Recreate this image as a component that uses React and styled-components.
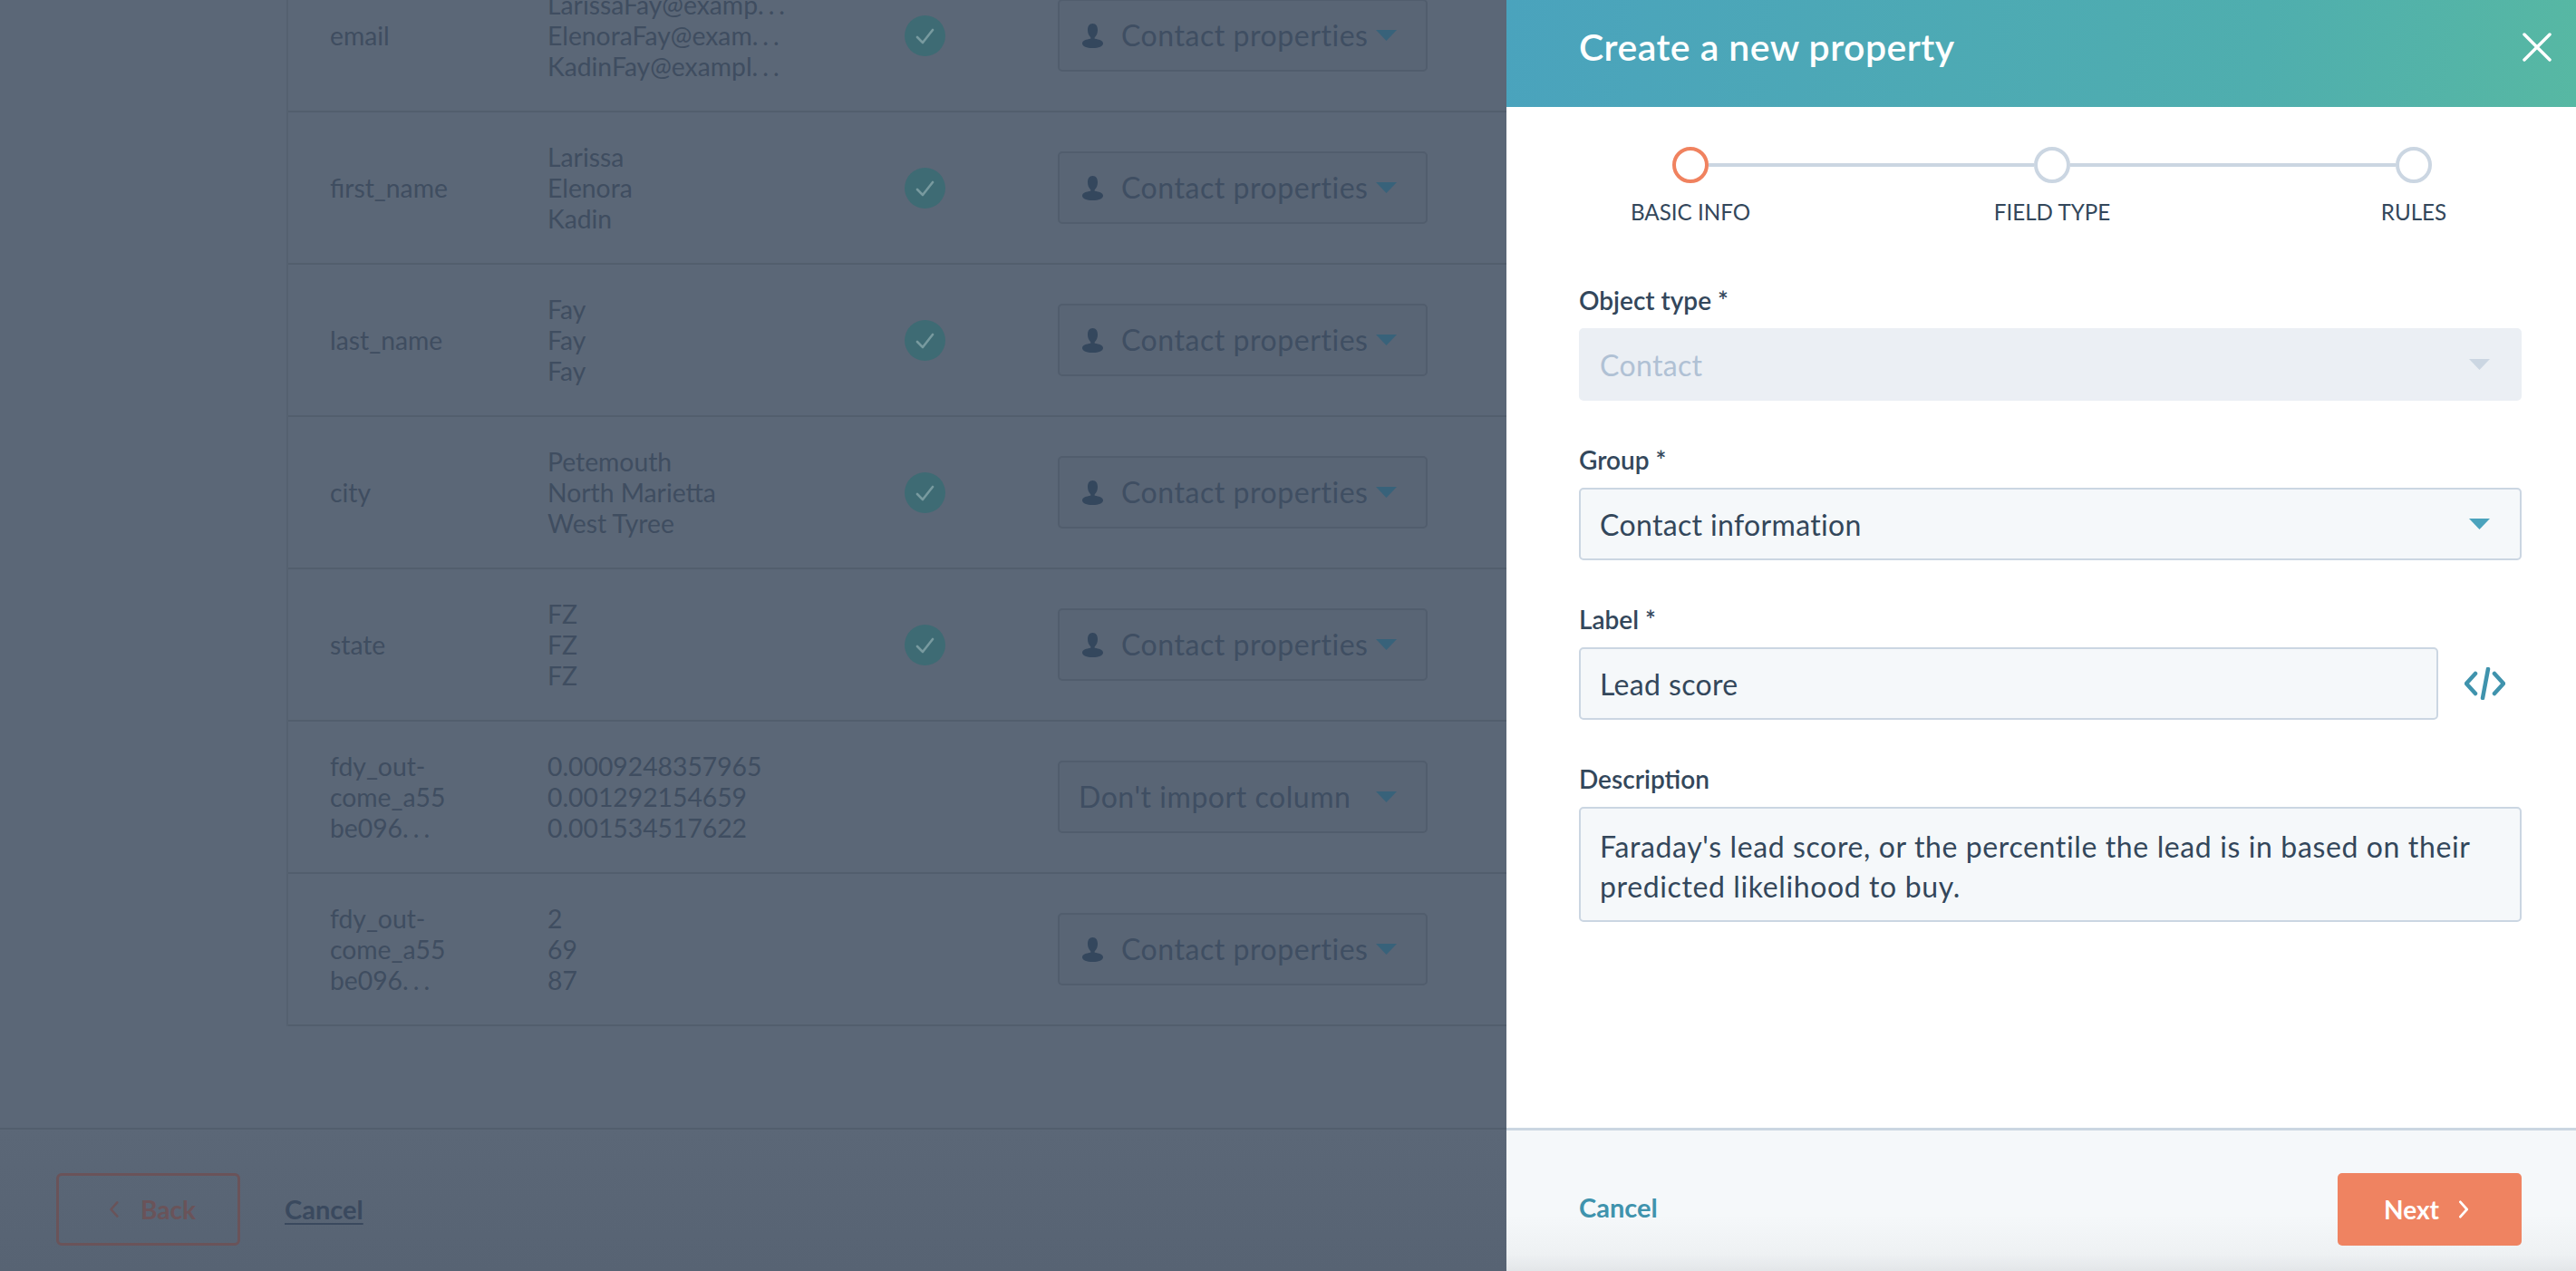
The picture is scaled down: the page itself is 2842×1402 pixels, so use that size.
import React from "react";
import styled, { createGlobalStyle } from "styled-components";

const Global = createGlobalStyle`
  html, body { margin: 0; padding: 0; height: 100%; }
  body { font-family: Lato, "Open Sans", sans-serif; overflow: hidden; background: #5b6777; }
  #root { height: 100%; }
  * { box-sizing: border-box; }
`;

const Page = styled.div`
  display: flex;
  width: 2842px;
  height: 1402px;
  overflow: hidden;
`;

const Main = styled.main`
  width: 1662px;
  flex: none;
  display: flex;
  flex-direction: column;
  background: #5b6777;
  overflow: hidden;
`;

const TableArea = styled.div`
  height: 1244px;
  flex: none;
  padding-left: 316px;
  overflow: hidden;
`;

const Table = styled.div`
  margin-top: -44px;
  border-left: 2px solid #556170;
`;

const Row = styled.div`
  display: grid;
  grid-template-columns: 240px 394px 169px 408px 1fr;
  align-items: center;
  height: 168px;
  padding-left: 46px;
  border-bottom: 2px solid #525e6d;
  color: #3f4d60;
  font-size: 28.3px;
  line-height: 34px;
`;

const FieldName = styled.div`
  width: 150px;
`;

const Samples = styled.div`
  display: flex;
  flex-direction: column;
  white-space: nowrap;
`;

const Ellipsis = styled.span`
  letter-spacing: 5px;
`;

const StatusCell = styled.div`
  display: flex;
  align-items: center;
`;

const Mapping = styled.div`
  display: flex;
  align-items: center;
  height: 80px;
  padding: 0 32px 0 ${(p) => (p.$icon ? "25px" : "21px")};
  border: 2px solid #515d6d;
  border-radius: 5px;
  background: #596575;
  color: #3f4e62;
  font-size: 32px;
  letter-spacing: 0.55px;
  white-space: nowrap;
`;

const MappingLabel = styled.span`
  flex: 1;
  margin-left: ${(p) => (p.$icon ? "20px" : "0")};
`;

const FooterLeft = styled.footer`
  flex: 1;
  display: flex;
  align-items: flex-start;
  gap: 49px;
  padding: 48px 62px 0;
  border-top: 2px solid #525e6d;
  background: linear-gradient(#5b6777, #576373);
`;

const BackButton = styled.div`
  display: flex;
  align-items: center;
  justify-content: center;
  gap: 24px;
  width: 203px;
  height: 80px;
  padding-left: 9px;
  border: 3px solid #6a5359;
  border-radius: 6px;
  color: #6a5359;
  font-size: 28px;
  font-weight: 700;
`;

const LeftCancel = styled.a`
  margin-top: 24px;
  color: #3a495e;
  font-size: 29px;
  font-weight: 700;
  line-height: 32px;
  text-decoration: underline;
  text-decoration-thickness: 2px;
  text-underline-offset: 4px;
`;

const Panel = styled.aside`
  width: 1180px;
  flex: none;
  display: flex;
  flex-direction: column;
  background: #fff;
`;

const PanelHeader = styled.header`
  height: 118px;
  flex: none;
  display: flex;
  align-items: center;
  justify-content: space-between;
  padding: 0 27px 14px 80px;
  background: linear-gradient(100deg, #4aa3bd 0%, #4faeae 70%, #57b8a3 100%);
`;

const Title = styled.h1`
  margin: 0;
  color: #fff;
  font-size: 41px;
  font-weight: 600;
  line-height: 48px;
  letter-spacing: 0.45px;
`;

const CloseButton = styled.button`
  display: flex;
  padding: 0;
  border: 0;
  background: none;
`;

const PanelBody = styled.div`
  flex: 1;
  padding: 44px 60px 0 80px;
`;

const Stepper = styled.div`
  display: flex;
  align-items: flex-start;
  margin: 0 99px 66px 103px;
`;

const Step = styled.div`
  width: 40px;
  flex: none;
  display: flex;
  flex-direction: column;
  align-items: center;
`;

const Dot = styled.span`
  width: 40px;
  height: 40px;
  flex: none;
  border: 4px solid ${(p) => (p.$active ? "#f0825f" : "#cbd6e2")};
  border-radius: 50%;
  background: #fff;
`;

const StepLabel = styled.span`
  margin-top: 16px;
  color: #33475b;
  font-size: 24.2px;
  line-height: 32px;
  white-space: nowrap;
`;

const Connector = styled.span`
  flex: 1;
  height: 4px;
  margin-top: 18px;
  background: #cbd6e2;
`;

const Form = styled.form`
  display: flex;
  flex-direction: column;
  gap: 50px;
`;

const Field = styled.div`
  display: flex;
  flex-direction: column;
  gap: 16px;
`;

const Label = styled.label`
  color: #33475b;
  font-size: 28px;
  font-weight: 600;
  line-height: 30px;
`;

const Control = styled.div`
  display: flex;
  align-items: center;
  justify-content: space-between;
  height: 80px;
  padding: 0 33px 0 21px;
  border: 2px solid ${(p) => (p.$disabled ? "#ebeff4" : "#cbd6e2")};
  border-radius: 5px;
  background: ${(p) => (p.$disabled ? "#ebeff4" : "#f5f8fa")};
  color: ${(p) => (p.$disabled ? "#b0c1d4" : "#33475b")};
  font-size: 32px;
  letter-spacing: 0.35px;
`;

const InlineRow = styled.div`
  display: flex;
  align-items: center;
  gap: 29px;
`;

const GrowControl = styled(Control)`
  flex: 1;
`;

const Textarea = styled.div`
  height: 127px;
  padding: 20px 21px;
  border: 2px solid #cbd6e2;
  border-radius: 5px;
  background: #f5f8fa;
  color: #33475b;
  font-size: 32px;
  line-height: 44px;
  letter-spacing: 0.62px;
`;

const PanelFooter = styled.footer`
  height: 158px;
  flex: none;
  display: flex;
  justify-content: space-between;
  align-items: flex-start;
  padding: 47px 60px 0 80px;
  border-top: 3px solid #cbd6e2;
  background: linear-gradient(#f5f8fa 0%, #f5f8fa 60%, #eef1f3 88%, #e3e6e9 100%);
`;

const PanelCancel = styled.a`
  margin-top: 22px;
  color: #3f93ad;
  font-size: 29px;
  font-weight: 700;
  line-height: 32px;
`;

const NextButton = styled.div`
  display: flex;
  align-items: center;
  justify-content: center;
  gap: 21px;
  width: 203px;
  height: 80px;
  padding-right: 6px;
  border-radius: 5px;
  background: #ef8361;
  color: #fff;
  font-size: 28px;
  font-weight: 700;
`;

const Caret = ({ color, w = 23, h = 12 }) => (
  <svg width={w} height={h} viewBox="0 0 23 12" style={{ flex: "none" }}>
    <path d="M0 0h23L11.5 12z" fill={color} />
  </svg>
);

const Person = () => (
  <svg width="23" height="27" viewBox="0 0 23 27" style={{ flex: "none" }}>
    <path
      d="M11.5 0C7.7 0 6 3 6 7c0 3 1 6 3 8 .6.6.6 1.4 0 1.8C5 17.6 0 18.500 0 22c0 3 5 5 11.500 5S23 25 23 22c0-3.500-5-4.400-9-5.200-.6-.4-.6-1.200 0-1.800 2-2 3-5 3-8 0-4-1.700-7-5.500-7z"
      fill="#34475d"
    />
  </svg>
);

const Check = () => (
  <svg width="45" height="45" viewBox="0 0 45 45" style={{ flex: "none" }}>
    <circle cx="22.5" cy="22.5" r="22.5" fill="#3e6b74" />
    <path d="M14 24l6 6 11-14" fill="none" stroke="#789a9f" strokeWidth="2.600" strokeLinecap="round" strokeLinejoin="round" />
  </svg>
);

const Chevron = ({ dir, color, w = 13, h = 22, sw = 3 }) => (
  <svg width={w} height={h} viewBox="0 0 13 22" style={{ flex: "none" }}>
    <path
      d={dir === "left" ? "M11 2L3 11l8 9" : "M2 2l8 9-8 9"}
      fill="none"
      stroke={color}
      strokeWidth={sw}
      strokeLinecap="round"
      strokeLinejoin="round"
    />
  </svg>
);

const rows = [
  { name: "email", samples: [["LarissaFay@examp", 1], ["ElenoraFay@exam", 1], ["KadinFay@exampl", 1]], ok: true, person: true },
  { name: "first_name", samples: [["Larissa"], ["Elenora"], ["Kadin"]], ok: true, person: true },
  { name: "last_name", samples: [["Fay"], ["Fay"], ["Fay"]], ok: true, person: true },
  { name: "city", samples: [["Petemouth"], ["North Marietta"], ["West Tyree"]], ok: true, person: true },
  { name: "state", samples: [["FZ"], ["FZ"], ["FZ"]], ok: true, person: true },
  { name: "fdy", samples: [["0.0009248357965"], ["0.001292154659"], ["0.001534517622"]], ok: false, person: false },
  { name: "fdy", samples: [["2"], ["69"], ["87"]], ok: false, person: true },
];

export default function App() {
  return (
    <Page>
      <Global />
      <Main>
        <TableArea>
          <Table>
            {rows.map((r, i) => (
              <Row key={i}>
                <FieldName>
                  {r.name === "fdy" ? (
                    <>
                      fdy_out-
                      <br />
                      come_a55
                      <br />
                      be096<Ellipsis>...</Ellipsis>
                    </>
                  ) : (
                    r.name
                  )}
                </FieldName>
                <Samples>
                  {r.samples.map(([s, cut], j) => (
                    <span key={j}>
                      {s}
                      {cut && <Ellipsis>...</Ellipsis>}
                    </span>
                  ))}
                </Samples>
                <StatusCell>{r.ok && <Check />}</StatusCell>
                <Mapping $icon={r.person}>
                  {r.person && <Person />}
                  <MappingLabel $icon={r.person}>
                    {r.person ? "Contact properties" : "Don't import column"}
                  </MappingLabel>
                  <Caret color="#38627a" />
                </Mapping>
                <span />
              </Row>
            ))}
          </Table>
        </TableArea>
        <FooterLeft>
          <BackButton>
            <Chevron dir="left" color="#6a5359" w={11} h={20} />
            Back
          </BackButton>
          <LeftCancel>Cancel</LeftCancel>
        </FooterLeft>
      </Main>
      <Panel>
        <PanelHeader>
          <Title>Create a new property</Title>
          <CloseButton>
            <svg width="32" height="32" viewBox="0 0 32 32">
              <path d="M2 2l28 28M30 2L2 30" stroke="#fff" strokeWidth="3.500" strokeLinecap="round" />
            </svg>
          </CloseButton>
        </PanelHeader>
        <PanelBody>
          <Stepper>
            <Step>
              <Dot $active />
              <StepLabel>BASIC INFO</StepLabel>
            </Step>
            <Connector />
            <Step>
              <Dot />
              <StepLabel>FIELD TYPE</StepLabel>
            </Step>
            <Connector />
            <Step>
              <Dot />
              <StepLabel>RULES</StepLabel>
            </Step>
          </Stepper>
          <Form>
            <Field>
              <Label>Object type *</Label>
              <Control $disabled>
                Contact
                <Caret color="#cbd6e2" />
              </Control>
            </Field>
            <Field>
              <Label>Group *</Label>
              <Control>
                Contact information
                <Caret color="#4ba3bd" />
              </Control>
            </Field>
            <Field>
              <Label>Label *</Label>
              <InlineRow>
                <GrowControl>Lead score</GrowControl>
                <svg width="45" height="36" viewBox="0 0 45 36" style={{ flex: "none", marginRight: "18px" }}>
                  <path
                    d="M12 7L2 18l10 11M33 7l10 11-10 11M26 2l-6 32"
                    fill="none"
                    stroke="#3f93ad"
                    strokeWidth="4.500"
                    strokeLinecap="round"
                    strokeLinejoin="round"
                  />
                </svg>
              </InlineRow>
            </Field>
            <Field>
              <Label>Description</Label>
              <Textarea>
                Faraday's lead score, or the percentile the lead is in based on their predicted likelihood to buy.
              </Textarea>
            </Field>
          </Form>
        </PanelBody>
        <PanelFooter>
          <PanelCancel>Cancel</PanelCancel>
          <NextButton>
            Next
            <Chevron dir="right" color="#fff" w={13} h={20} />
          </NextButton>
        </PanelFooter>
      </Panel>
    </Page>
  );
}
